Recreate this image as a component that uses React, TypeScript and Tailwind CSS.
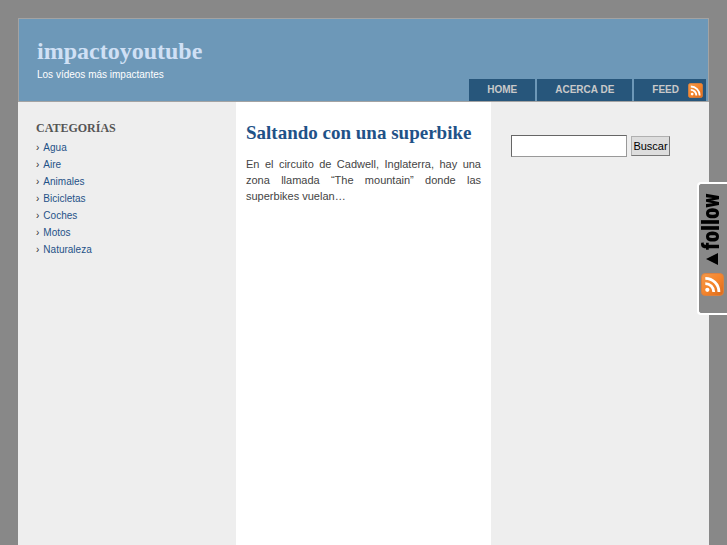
import React from "react";

const categories = ["Agua", "Aire", "Animales", "Bicicletas", "Coches", "Motos", "Naturaleza"];

function FeedIcon({ className, id }: { className: string; id: string }) {
  return (
    <svg viewBox="0 0 24 24" className={className} aria-hidden="true">
      <defs>
        <linearGradient id={id} x1="0" y1="0" x2="1" y2="1">
          <stop offset="0" stopColor="#f39a4c" />
          <stop offset="0.5" stopColor="#f5852c" />
          <stop offset="1" stopColor="#d96a1c" />
        </linearGradient>
      </defs>
      <rect x="0.5" y="0.5" width="23" height="23" rx="4" fill={`url(#${id})`} stroke="#e0813c" />
      <circle cx="6.6" cy="17.6" r="2.2" fill="#fff" />
      <path d="M4.5 11a8.8 8.8 0 0 1 8.8 8.8M4.5 5.6a14.2 14.2 0 0 1 14.2 14.2" fill="none" stroke="#fff" strokeWidth="2.9" />
    </svg>
  );
}

function Header() {
  return (
    <header className="flex flex-col border border-[#a3a3a3] bg-[#6d98b8]">
      <div className="px-[18px] pt-[18px]">
        <h1 className="font-['Liberation_Serif',serif] text-[24px] leading-[28px] font-bold text-[#d0e0f5]">
          <a href="#">impactoyoutube</a>
        </h1>
        <p className="pt-[6px] text-[10px] leading-[8px] text-white">Los vídeos más impactantes</p>
      </div>
      <nav className="flex justify-end gap-[2px] pr-[2px] text-[10px] leading-[22px] font-bold text-[#c9c9c9]">
        <a href="#" className="bg-[#27567b] px-[18px]">HOME</a>
        <a href="#" className="bg-[#27567b] px-[18px]">ACERCA DE</a>
        <a href="#" className="flex items-center gap-[9px] bg-[#27567b] pr-[3px] pl-[18px]">
          FEED
          <FeedIcon id="feed-small" className="size-[15px]" />
        </a>
      </nav>
    </header>
  );
}

export default function App() {
  return (
    <div className="flex min-h-screen flex-col overflow-hidden bg-[#888888] px-[18px] pt-[18px] font-['Liberation_Sans',Arial,sans-serif]">
      <Header />
      <div className="flex flex-1 bg-[#eeeeee]">
        <aside className="w-[218px] shrink-0 px-[18px] pt-[17px]">
          <h2 className="font-['Liberation_Serif',serif] text-[12px] leading-[18px] font-bold text-[#555555]">CATEGORÍAS</h2>
          <ul className="pt-[2px] text-[10px] leading-[17px]">
            {categories.map((name) => (
              <li key={name} className="flex gap-[4px]">
                <span className="text-[#333333]">›</span>
                <a href="#" className="text-[#1f5288]">{name}</a>
              </li>
            ))}
          </ul>
        </aside>
        <main className="min-w-0 flex-1 bg-white px-[10px] pt-[18px]">
          <h2 className="font-['Liberation_Serif',serif] text-[19px] leading-[26px] font-bold whitespace-nowrap text-[#1f5288]">
            <a href="#">Saltando con una superbike</a>
          </h2>
          <p className="pt-[10px] text-justify text-[11px] leading-[16px] text-[#444444]">
            En el circuito de Cadwell, Inglaterra, hay una zona llamada “The mountain” donde las superbikes vuelan…
          </p>
        </main>
        <aside className="w-[218px] shrink-0 pt-[33px] pl-[20px]">
          <form className="flex items-center gap-[4px]" onSubmit={(e) => e.preventDefault()}>
            <input
              type="text"
              aria-label="Buscar"
              className="h-[22px] w-[116px] border border-[#999999] border-t-[#666666] border-l-[#666666] bg-white px-1 text-[11px]"
            />
            <button className="h-[20px] w-[39px] border border-[#b0b0b0] border-r-[#777777] border-b-[#777777] bg-[#dddddd] text-[11px] leading-[18px] text-black">
              Buscar
            </button>
          </form>
        </aside>
      </div>
      <a
        href="#"
        aria-label="follow"
        className="fixed top-[182px] right-0 flex h-[133px] w-[30px] flex-col items-center rounded-l-[4px] border-2 border-r-0 border-white bg-[#888888] pt-[9px] pr-[2px] text-black"
      >
        <span className="flex h-[57px] rotate-180 justify-start font-['Impact','Roboto_Condensed',Roboto,sans-serif] text-[23px] leading-[24px] font-black whitespace-nowrap [writing-mode:vertical-rl]">
          follow
        </span>
        <svg viewBox="0 0 12 12" className="mt-[3px] size-[12px] shrink-0" aria-hidden="true">
          <path d="M12 0v12L0 6z" fill="#000" />
        </svg>
        <FeedIcon id="feed-large" className="mt-[8px] size-[23px] shrink-0" />
      </a>
    </div>
  );
}
